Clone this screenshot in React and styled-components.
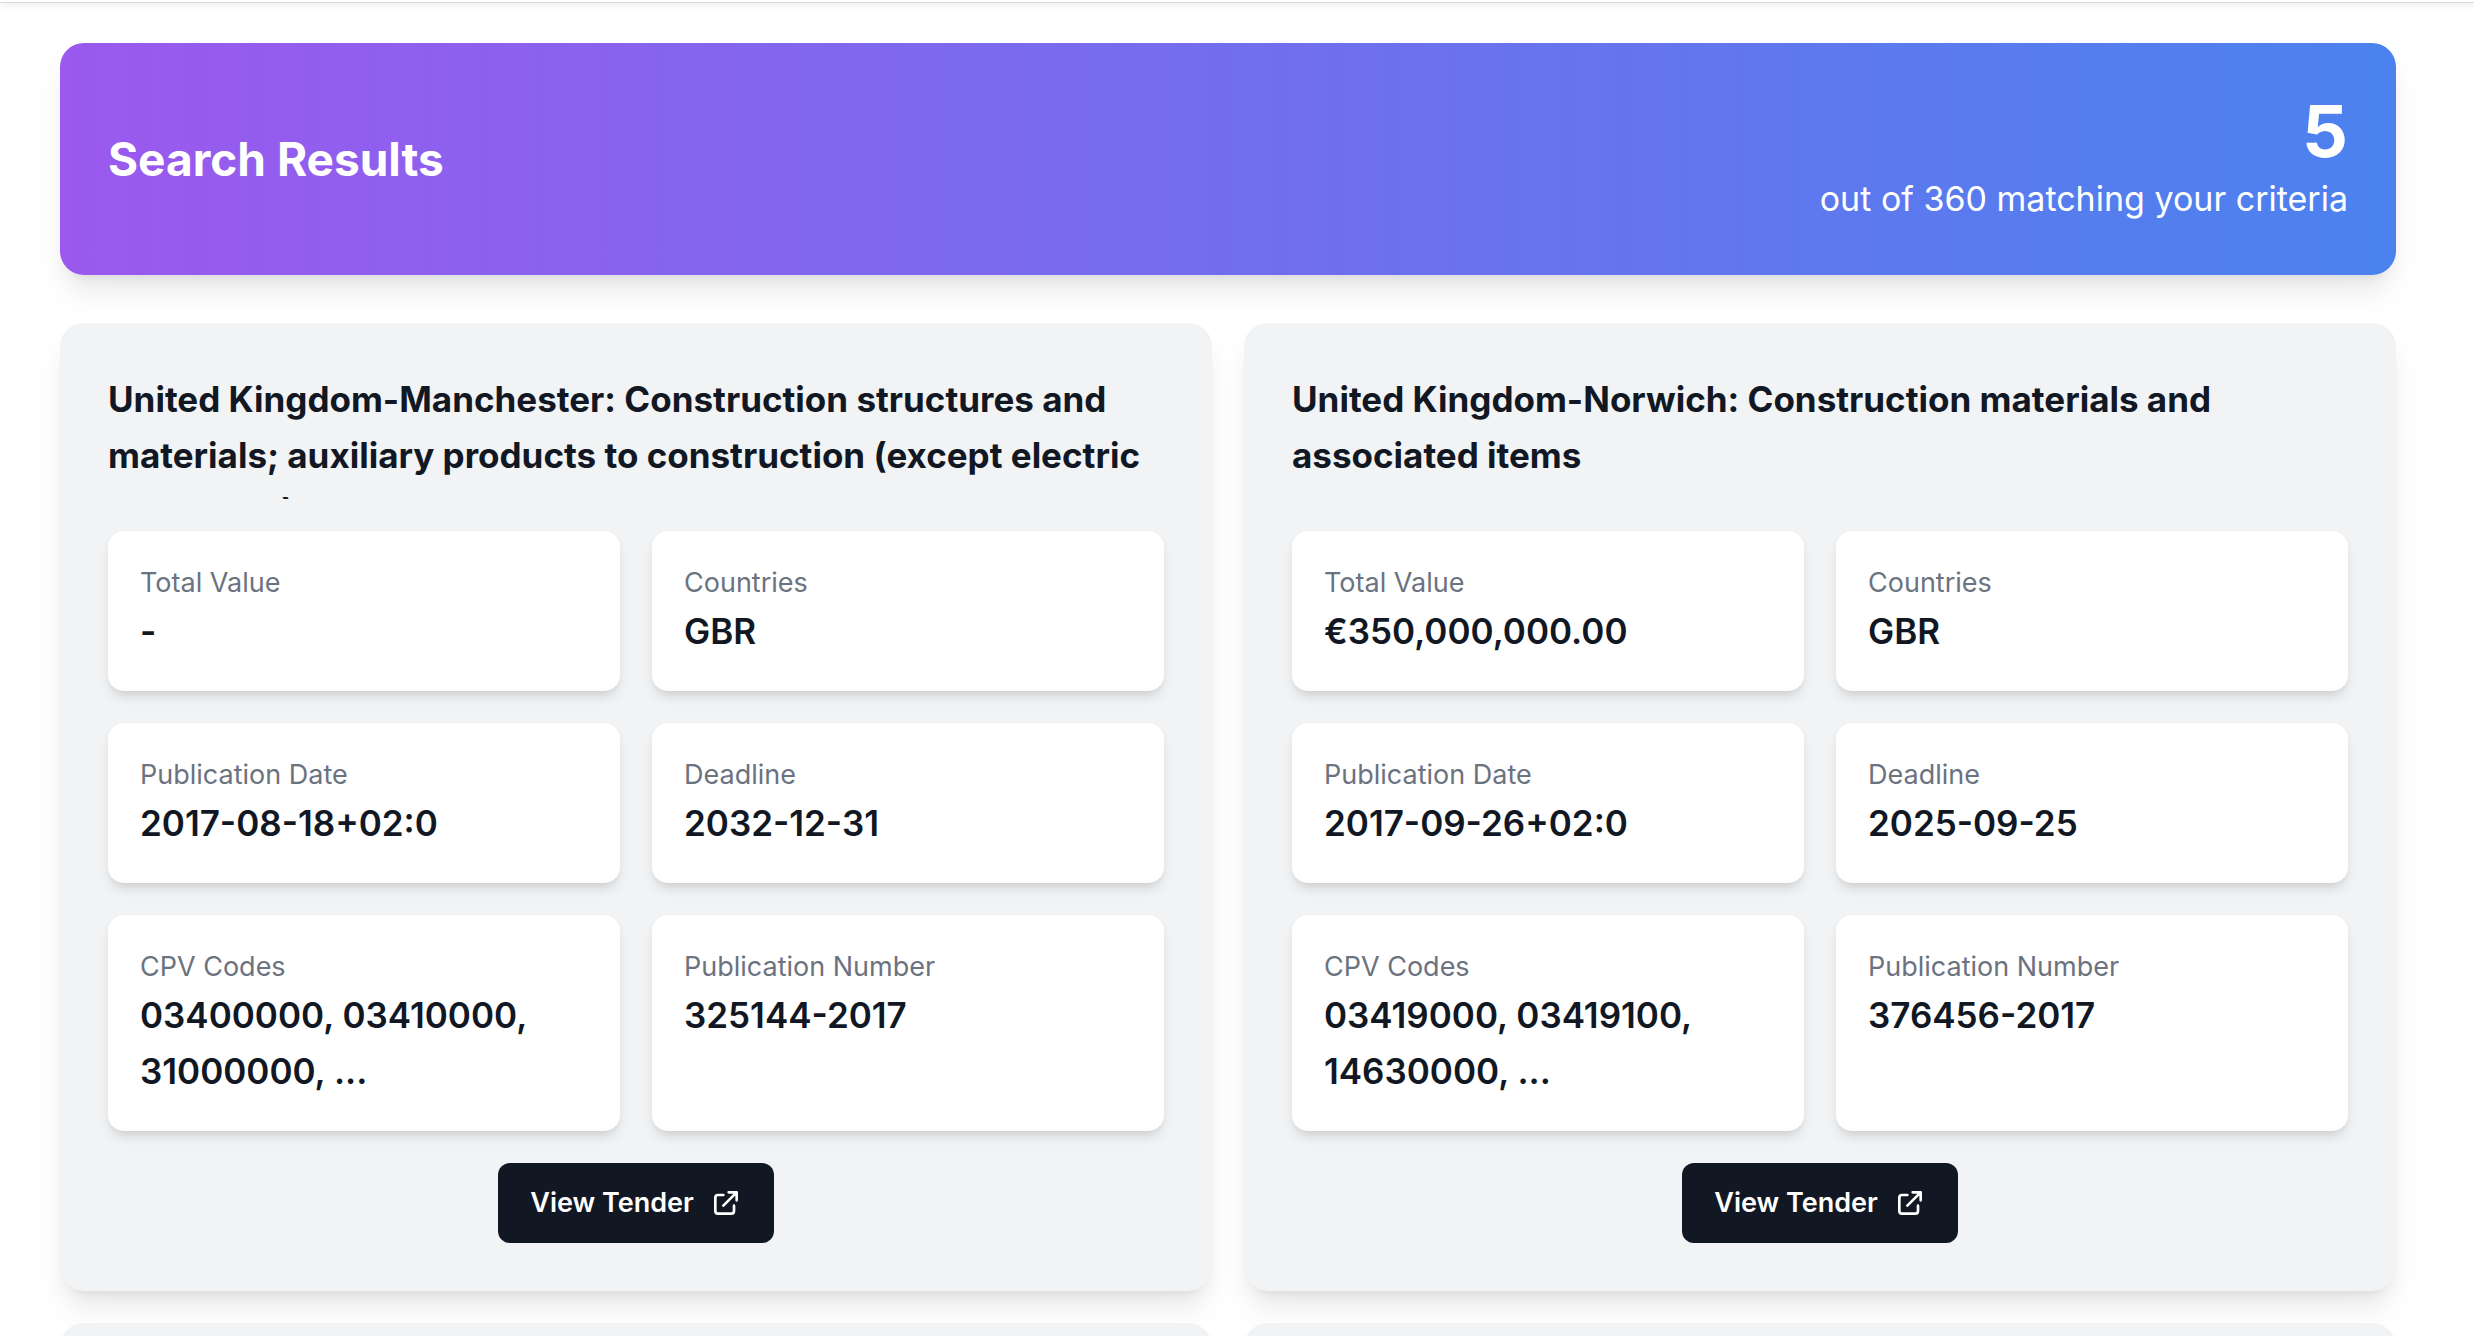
import React from 'react';
import styled, { createGlobalStyle } from 'styled-components';

const tenders = [
  {
    id: '325144-2017',
    title: 'United Kingdom-Manchester: Construction structures and materials; auxiliary products to construction (except electric apparatus)',
    totalValue: '-',
    countries: 'GBR',
    publicationDate: '2017-08-18+02:0',
    deadline: '2032-12-31',
    cpvCodes: '03400000, 03410000, 31000000, ...',
  },
  {
    id: '376456-2017',
    title: 'United Kingdom-Norwich: Construction materials and associated items',
    totalValue: '€350,000,000.00',
    countries: 'GBR',
    publicationDate: '2017-09-26+02:0',
    deadline: '2025-09-25',
    cpvCodes: '03419000, 03419100, 14630000, ...',
  },
];

function ExternalIcon() {
  return (
    <svg width="32" height="32" viewBox="0 0 24 24" fill="none" stroke="currentColor" strokeWidth="2" strokeLinecap="round" strokeLinejoin="round" aria-hidden="true">
      <path d="M10 6H6a2 2 0 00-2 2v10a2 2 0 002 2h10a2 2 0 002-2v-4M14 4h6m0 0v6m0-6L10 14" />
    </svg>
  );
}

function Stat({ label, value }) {
  return (
    <StatBox>
      <dt>{label}</dt>
      <dd>{value}</dd>
    </StatBox>
  );
}

function TenderCard({ tender }) {
  return (
    <Card>
      <Title>{tender.title}</Title>
      <Stats>
        <Stat label="Total Value" value={tender.totalValue} />
        <Stat label="Countries" value={tender.countries} />
        <Stat label="Publication Date" value={tender.publicationDate} />
        <Stat label="Deadline" value={tender.deadline} />
        <Stat label="CPV Codes" value={tender.cpvCodes} />
        <Stat label="Publication Number" value={tender.id} />
      </Stats>
      <ViewLink href={`#${tender.id}`}>
        View Tender
        <ExternalIcon />
      </ViewLink>
    </Card>
  );
}

function App() {
  return (
    <>
      <GlobalStyle />
      <TopBar />
      <Main>
        <Banner>
          <h1>Search Results</h1>
          <Summary>
            <strong>5</strong>
            <span>out of 360 matching your criteria</span>
          </Summary>
        </Banner>
        <Results>
          {tenders.map((tender) => (
            <TenderCard key={tender.id} tender={tender} />
          ))}
          <Card />
          <Card />
        </Results>
      </Main>
    </>
  );
}

export default App;

const GlobalStyle = createGlobalStyle`
    * {
        box-sizing: border-box;
    }

    body {
        margin: 0;
        background: #ffffff;
        color: #111823;
        font-family: Inter, "Liberation Sans", sans-serif;
    }

    #root {
        height: 100vh;
        overflow: hidden;
    }
`

const TopBar = styled.header`
    height: 3px;
    background: #ffffff;
    border-bottom: 1px solid #dcdcdc;
    box-shadow: 0 2px 6px rgba(0, 0, 0, 0.12);
`

const Main = styled.main`
    padding: 40px 78px 48px 60px;
`

const Banner = styled.section`
    display: flex;
    align-items: center;
    justify-content: space-between;
    padding: 48px;
    border-radius: 24px;
    color: #ffffff;
    background: linear-gradient(to right, #9b59ee, #4b82ee);
    box-shadow: 0 20px 30px -6px rgba(0, 0, 0, 0.1), 0 8px 12px -8px rgba(0, 0, 0, 0.1);

    h1 {
        margin: 0;
        font-size: 46px;
        line-height: 64px;
        font-weight: 700;
    }
`

const Summary = styled.div`
    display: flex;
    flex-direction: column;
    align-items: flex-end;

    strong {
        font-size: 72px;
        line-height: 80px;
        font-weight: 700;
    }

    span {
        font-size: 34px;
        line-height: 56px;
    }
`

const Results = styled.div`
    display: grid;
    grid-template-columns: repeat(2, 1fr);
    gap: 32px;
    margin-top: 48px;
`

const Card = styled.article`
    display: flex;
    flex-direction: column;
    align-items: center;
    gap: 32px;
    padding: 48px;
    border-radius: 24px;
    background: #f1f3f5;
    box-shadow: 0 20px 30px -6px rgba(0, 0, 0, 0.1), 0 8px 12px -8px rgba(0, 0, 0, 0.1);
`

const Title = styled.h2`
    width: 100%;
    height: 128px;
    margin: 0;
    overflow: hidden;
    font-size: 35px;
    line-height: 56px;
    font-weight: 700;
`

const Stats = styled.dl`
    display: grid;
    grid-template-columns: repeat(2, 1fr);
    gap: 32px;
    width: 100%;
    margin: 0;
`

const StatBox = styled.div`
    padding: 32px;
    border-radius: 16px;
    background: #ffffff;
    box-shadow: 0 8px 12px -2px rgba(0, 0, 0, 0.1), 0 4px 8px -4px rgba(0, 0, 0, 0.1);

    dt {
        color: #6b7280;
        font-size: 27px;
        line-height: 40px;
    }

    dd {
        margin: 0;
        font-size: 35px;
        line-height: 56px;
        font-weight: 600;
    }
`

const ViewLink = styled.a`
    display: inline-flex;
    align-items: center;
    gap: 16px;
    padding: 20px 32px;
    border-radius: 12px;
    background: #111823;
    color: #ffffff;
    font-size: 27px;
    line-height: 40px;
    font-weight: 600;
    text-decoration: none;
`
